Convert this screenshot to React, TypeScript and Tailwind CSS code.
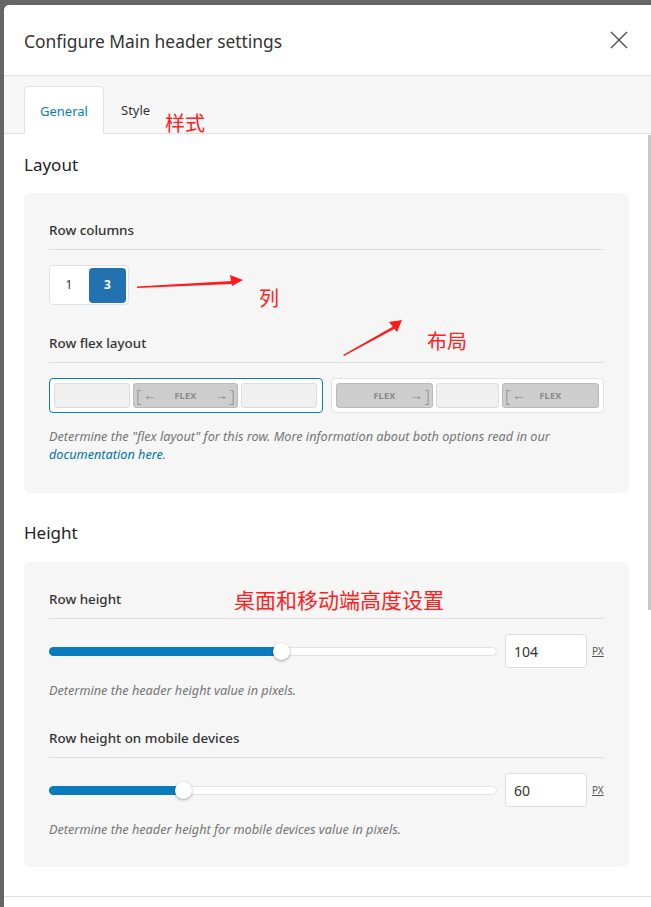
import React from "react";

const font = { fontFamily: '"Noto Sans", "Open Sans", sans-serif' };

function Annotations() {
  return (
    <>
      <svg className="absolute left-0 top-0 pointer-events-none" width="651" height="907">
        <polygon points="137,286.6 232,281 232,284 137,288" fill="#ff1a1a" />
        <polygon points="243,280 230,275 232,286" fill="#ff1a1a" />
        <polygon points="343,355 394,326 396,328 344,356" fill="#ff1a1a" />
        <polygon points="402,320 389,322 397,332" fill="#ff1a1a" />
      </svg>
      <span className="absolute left-[165px] top-[111px] text-[20px] leading-[24px] text-[#ff2020]" style={{ fontFamily: '"Noto Sans CJK SC", sans-serif' }}>样式</span>
      <span className="absolute left-[259px] top-[286px] text-[20px] leading-[24px] text-[#ff2020]" style={{ fontFamily: '"Noto Sans CJK SC", sans-serif' }}>列</span>
      <span className="absolute left-[427px] top-[329px] text-[20px] leading-[24px] text-[#ff2020]" style={{ fontFamily: '"Noto Sans CJK SC", sans-serif' }}>布局</span>
      <span className="absolute left-[234px] top-[587px] text-[21px] leading-[25px] text-[#ff2020]" style={{ fontFamily: '"Noto Sans CJK SC", sans-serif' }}>桌面和移动端高度设置</span>
    </>
  );
}

function FlexCell({ kind }: { kind: "empty" | "both" | "right" | "left" }) {
  if (kind === "empty") {
    return <div className="h-[25px] rounded-[3px] border border-[#dcdcdc] bg-[#f0f0f0]" />;
  }
  return (
    <div className="h-[25px] rounded-[3px] border border-[#b9b9b9] bg-[#cdcdcd] flex items-center px-[2px] text-[#808080]">
      <span className="w-[18px] text-[13px] leading-none flex items-center">
        {kind !== "right" && <span className="text-[16px] font-light text-[#8e8e8e]">[</span>}
        {kind !== "right" && <span className="ml-[2px]">←</span>}
      </span>
      <span className="flex-1 text-center text-[9px] font-bold tracking-[0.3px] text-[#8a8a8a]">FLEX</span>
      <span className="w-[18px] text-[13px] leading-none flex items-center justify-end">
        {kind !== "left" && <span className="mr-[2px]">→</span>}
        {kind !== "left" && <span className="text-[16px] font-light text-[#8e8e8e]">]</span>}
      </span>
    </div>
  );
}

function Slider({ pct, value, label, desc }: { pct: number; value: string; label: string; desc: string }) {
  return (
    <div>
      <div className="text-[13.4px] leading-[18px] font-medium text-[#333] pb-[10px] border-b border-[#dddddd]">{label}</div>
      <div className="mt-[15px] flex items-center">
        <div className="relative w-[448px] h-[9px] rounded-full bg-white border border-[#e2e2e2]">
          <div className="absolute left-[-1px] top-[-1px] h-[9px] rounded-full bg-[#0a7bbd]" style={{ width: `${pct}%` }} />
          <div
            className="absolute top-[-5px] w-[17px] h-[17px] rounded-full bg-white shadow-[0_1px_3px_rgba(0,0,0,0.35)]"
            style={{ left: `calc(${pct}% - 9px)` }}
          />
        </div>
        <div className="ml-[8px] w-[82px] h-[34px] rounded-[4px] border border-[#dddddd] bg-white flex items-center pl-[8px] text-[14px] text-[#333]">
          {value}
        </div>
        <span className="ml-[5px] text-[10px] underline text-[#555]">PX</span>
      </div>
      <p className="mt-[13px] text-[12.7px] leading-[18px] italic text-[#757575]">{desc}</p>
    </div>
  );
}

export default function App() {
  return (
    <div className="relative w-[651px] h-[907px] bg-[#666666] pl-[4px] pt-[5px] overflow-hidden" style={font}>
      <div className="h-full bg-white rounded-tl-[5px] flex flex-col">
        {/* header */}
        <div className="h-[70px] shrink-0 flex items-center justify-between pl-[20px] pr-[22px]">
          <h1 className="text-[17.4px] text-[#333] pt-[2px]">Configure Main header settings</h1>
          <svg width="20" height="20" viewBox="0 0 20 20" className="text-[#555]">
            <path d="M2 2 L18 18 M18 2 L2 18" stroke="currentColor" strokeWidth="1.5" />
          </svg>
        </div>
        {/* tabs */}
        <div className="h-[59px] shrink-0 bg-[#f7f7f7] border-y border-[#e2e2e2] flex items-end pl-[20px]">
          <div className="h-[48px] w-[80px] bg-white border border-b-0 border-[#e2e2e2] rounded-t-[4px] flex items-center justify-center text-[13px] text-[#0a7bbd] -mb-px pt-[2px]">
            General
          </div>
          <div className="h-[48px] px-[17px] flex items-center text-[13px] text-[#333] -mb-px pt-[2px]">Style</div>
        </div>
        {/* content */}
        <div className="flex-1 pl-[20px] pr-[22px] pt-[20px] border-b border-[#e2e2e2]">
          <h2 className="text-[17px] leading-[22px] text-[#222]">Layout</h2>
          <div className="mt-[17px] rounded-[6px] bg-[#f6f6f6] px-[25px] pt-[28px] pb-[30px]">
            <div className="text-[13.4px] leading-[18px] font-medium text-[#333] pb-[10px] border-b border-[#dddddd]">Row columns</div>
            <div className="mt-[15px] inline-flex h-[40px] items-center gap-[3px] rounded-[4px] border border-[#e2e2e2] bg-white p-[2px]">
              <div className="w-[34px] h-[35px] flex items-center justify-center text-[12px] text-[#333]">1</div>
              <div className="w-[37px] h-[35px] rounded-[4px] bg-[#2271b1] flex items-center justify-center text-[12px] font-bold text-white">3</div>
            </div>
            <div className="mt-[29px] text-[13.4px] leading-[18px] font-medium text-[#333] pb-[10px] border-b border-[#dddddd]">Row flex layout</div>
            <div className="mt-[15px] flex gap-[8px]">
              <div className="w-[274px] h-[35px] rounded-[4px] border border-[#0a7bbd] bg-white px-[4px] grid grid-cols-[76px_105px_76px] gap-[3px] items-center">
                <FlexCell kind="empty" />
                <FlexCell kind="both" />
                <FlexCell kind="empty" />
              </div>
              <div className="w-[273px] h-[35px] rounded-[4px] border border-[#e2e2e2] bg-white px-[4px] grid grid-cols-[97px_63px_97px] gap-[3px] items-center">
                <FlexCell kind="right" />
                <FlexCell kind="empty" />
                <FlexCell kind="left" />
              </div>
            </div>
            <p className="mt-[14px] text-[12.7px] leading-[18px] italic text-[#757575]">
              Determine the "flex layout" for this row. More information about both options read in our{" "}
              <span className="text-[#0073aa]">documentation here</span>.
            </p>
          </div>

          <h2 className="mt-[29px] text-[17px] leading-[22px] text-[#222]">Height</h2>
          <div className="mt-[18px] rounded-[6px] bg-[#f6f6f6] px-[25px] pt-[28px] pb-[29px]">
            <Slider pct={52} value="104" label="Row height" desc="Determine the header height value in pixels." />
            <div className="mt-[30px]">
              <Slider pct={30} value="60" label="Row height on mobile devices" desc="Determine the header height for mobile devices value in pixels." />
            </div>
          </div>
        </div>
        <div className="h-[10px] shrink-0" />
      </div>
      <div className="absolute right-0 top-[135px] w-[3px] h-[475px] bg-[#c8c8c8]" />
      <Annotations />
    </div>
  );
}
